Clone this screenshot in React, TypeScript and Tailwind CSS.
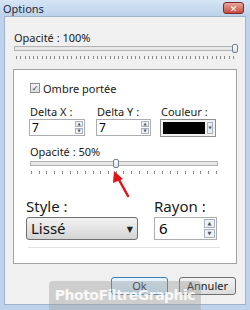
import React from 'react';

const font = { fontFamily: '"Noto Sans", "DejaVu Sans", sans-serif' };

const Ticks: React.FC<{ count: number; className?: string }> = ({ count, className }) => (
  <div className={`flex justify-between h-[3px] ${className ?? ''}`}>
    {Array.from({ length: count }).map((_, i) => (
      <div key={i} className="w-px h-full bg-[#8a8a8a]" />
    ))}
  </div>
);

const Thumb: React.FC = () => (
  <div className="w-[6px] h-[9px] rounded-[2px] border border-[#6f7f8f] bg-gradient-to-b from-[#ffffff] to-[#d8e0e8]" />
);

const Spinner: React.FC<{ big?: boolean }> = ({ big }) => (
  <div className={`flex flex-col gap-px ${big ? 'w-[11px]' : 'w-[8px]'}`}>
    {['▲', '▼'].map((g) => (
      <div
        key={g}
        className={`flex items-center justify-center border border-[#a9b3c0] bg-[#eef1f5] text-[#4a5566] leading-none ${big ? 'h-[9px] text-[5px]' : 'h-[6px] text-[4px]'}`}
      >
        {g}
      </div>
    ))}
  </div>
);

const NumberField: React.FC<{ value: string; w: string }> = ({ value, w }) => (
  <div className={`${w} h-[17px] flex items-center justify-between bg-white border border-[#abadb3] pl-[2px] pr-[1px]`}>
    <span className="text-[12px] leading-none text-black">{value}</span>
    <Spinner />
  </div>
);

export default function App() {
  return (
    <div style={font} className="relative w-[250px] h-[310px] bg-[#bfd4ec] flex flex-col px-[4px] pb-[5px] overflow-hidden">
      {/* title bar */}
      <div className="h-[16px] flex items-center justify-between -mx-[4px] px-[3px] bg-gradient-to-b from-[#d6e5f5] to-[#bcd2ea]">
        <span className="text-[11px] text-[#1b2a3c] leading-none">Options</span>
        <div className="w-[21px] h-[12px] mr-[3px] rounded-[3px] border border-[#7a2a2a] bg-gradient-to-b from-[#e8a59a] to-[#c54a3c] flex items-center justify-center text-white text-[9px] font-bold leading-none">
          ✕
        </div>
      </div>

      {/* body */}
      <div className="flex-1 bg-[#f0f0f0] border border-[#9fb4cc] px-[8px] pt-[14px] flex flex-col">
        <div className="ml-[1px] h-[14px] text-[11px] leading-[14px] text-[#1a1a1a]">Opacité : 100%</div>
        <div className="relative ml-[1px] mr-[1px] mt-[1px] h-[5px] border border-[#b3b3b3] bg-[#e7e7e7]">
          <div className="absolute right-[-3px] top-[-3px]">
            <Thumb />
          </div>
        </div>
        <Ticks count={52} className="mt-[5px] mx-[3px]" />

        {/* panel */}
        <div className="mt-[10px] h-[195px] bg-white border border-[#a3a3a3] pl-[15px] pt-[13px] flex flex-col">
          <div className="flex items-center gap-[3px] ml-[1px] h-[10px]">
            <div className="w-[10px] h-[10px] border border-[#8e8f8f] bg-gradient-to-b from-[#f4f4f4] to-[#dcdcdc] flex items-center justify-center text-[8px] leading-none text-[#2b3f6a]">
              ✓
            </div>
            <span className="text-[11px] leading-none text-[#1a1a1a]">Ombre portée</span>
          </div>

          <div className="flex mt-[13px] text-[11px] text-[#1a1a1a]">
            <div className="w-[67px] flex flex-col">
              <span className="h-[13px] leading-[12px] ml-[1px]">Delta X :</span>
              <NumberField value="7" w="w-[56px]" />
            </div>
            <div className="w-[64px] flex flex-col">
              <span className="h-[13px] leading-[12px] ml-[1px]">Delta Y :</span>
              <NumberField value="7" w="w-[55px]" />
            </div>
            <div className="flex flex-col">
              <span className="h-[13px] leading-[12px] ml-[1px]">Couleur :</span>
              <div className="w-[56px] h-[18px] flex items-center gap-[2px] border border-[#8e8f8f] bg-[#f2f2f2] p-[2px]">
                <div className="w-[42px] h-full bg-black" />
                <div className="flex-1 h-full border border-[#a9b3c0] bg-[#e9ecf0] flex items-center justify-center text-[4px] text-[#4a5566]">
                  ▼
                </div>
              </div>
            </div>
          </div>

          <div className="mt-[8px] h-[14px] ml-[1px] text-[11px] leading-[14px] text-[#1a1a1a]">Opacité : 50%</div>
          <div className="relative ml-[1px] w-[188px] mt-[2px] h-[5px] border border-[#b3b3b3] bg-[#e7e7e7]">
            <div className="absolute left-[82px] top-[-3px]">
              <Thumb />
            </div>
          </div>
          <Ticks count={25} className="mt-[5px] ml-[2px] w-[186px]" />

          <div className="-ml-[3px] mt-[24px] flex w-[195px]">
            <div className="w-[128px] flex flex-col">
              <span className="text-[15px] leading-[17px] text-[#1a1a1a]">Style :</span>
              <div className="mt-[2px] w-[112px] h-[23px] rounded-[3px] border border-[#707070] bg-gradient-to-b from-[#f3f3f3] to-[#d4d4d4] flex items-center justify-between px-[4px]">
                <span className="text-[15px] leading-none text-[#111]">Lissé</span>
                <span className="text-[8px] leading-none text-[#222]">▼</span>
              </div>
            </div>
            <div className="flex flex-col">
              <span className="text-[15px] leading-[17px] text-[#1a1a1a]">Rayon :</span>
              <div className="mt-[2px] w-[63px] h-[23px] flex items-center justify-between bg-white border border-[#abadb3] pl-[4px] pr-[1px]">
                <span className="text-[15px] leading-none text-black">6</span>
                <Spinner big />
              </div>
            </div>
          </div>
          <div className="ml-[-1px] mt-[7px] w-[192px] h-px bg-[#e2e2e2]" />
        </div>

        {/* buttons */}
        <div className="mt-[13px] flex justify-end gap-[11px] mr-[1px]">
          <div className="w-[57px] h-[18px] rounded-[3px] border border-[#3c7fb1] bg-gradient-to-b from-[#eaf6fd] to-[#c6e4f7] flex items-center justify-center text-[11px] text-[#1a1a1a]">
            Ok
          </div>
          <div className="w-[57px] h-[18px] rounded-[3px] border border-[#707070] bg-gradient-to-b from-[#f2f2f2] to-[#dcdcdc] flex items-center justify-center text-[11px] text-[#1a1a1a]">
            Annuler
          </div>
        </div>
      </div>

      {/* red arrow */}
      <svg className="absolute left-0 top-0 pointer-events-none" width="250" height="310">
        <line x1="128" y1="196" x2="118" y2="178" stroke="#e0141b" strokeWidth="2.5" strokeLinecap="round" />
        <polygon points="114,171 113,183 123,179" fill="#e0141b" />
      </svg>

      {/* watermark */}
      <div className="absolute left-[49px] top-[281px] w-[152px] h-[29px] rounded-t-[4px] bg-[#9a9a9a]/40 flex items-center justify-center">
        <span style={{ fontFamily: '"DejaVu Sans", sans-serif' }} className="text-[14px] font-bold text-white/85 tracking-[-0.5px]">
          PhotoFiltreGraphic
        </span>
      </div>
    </div>
  );
}
